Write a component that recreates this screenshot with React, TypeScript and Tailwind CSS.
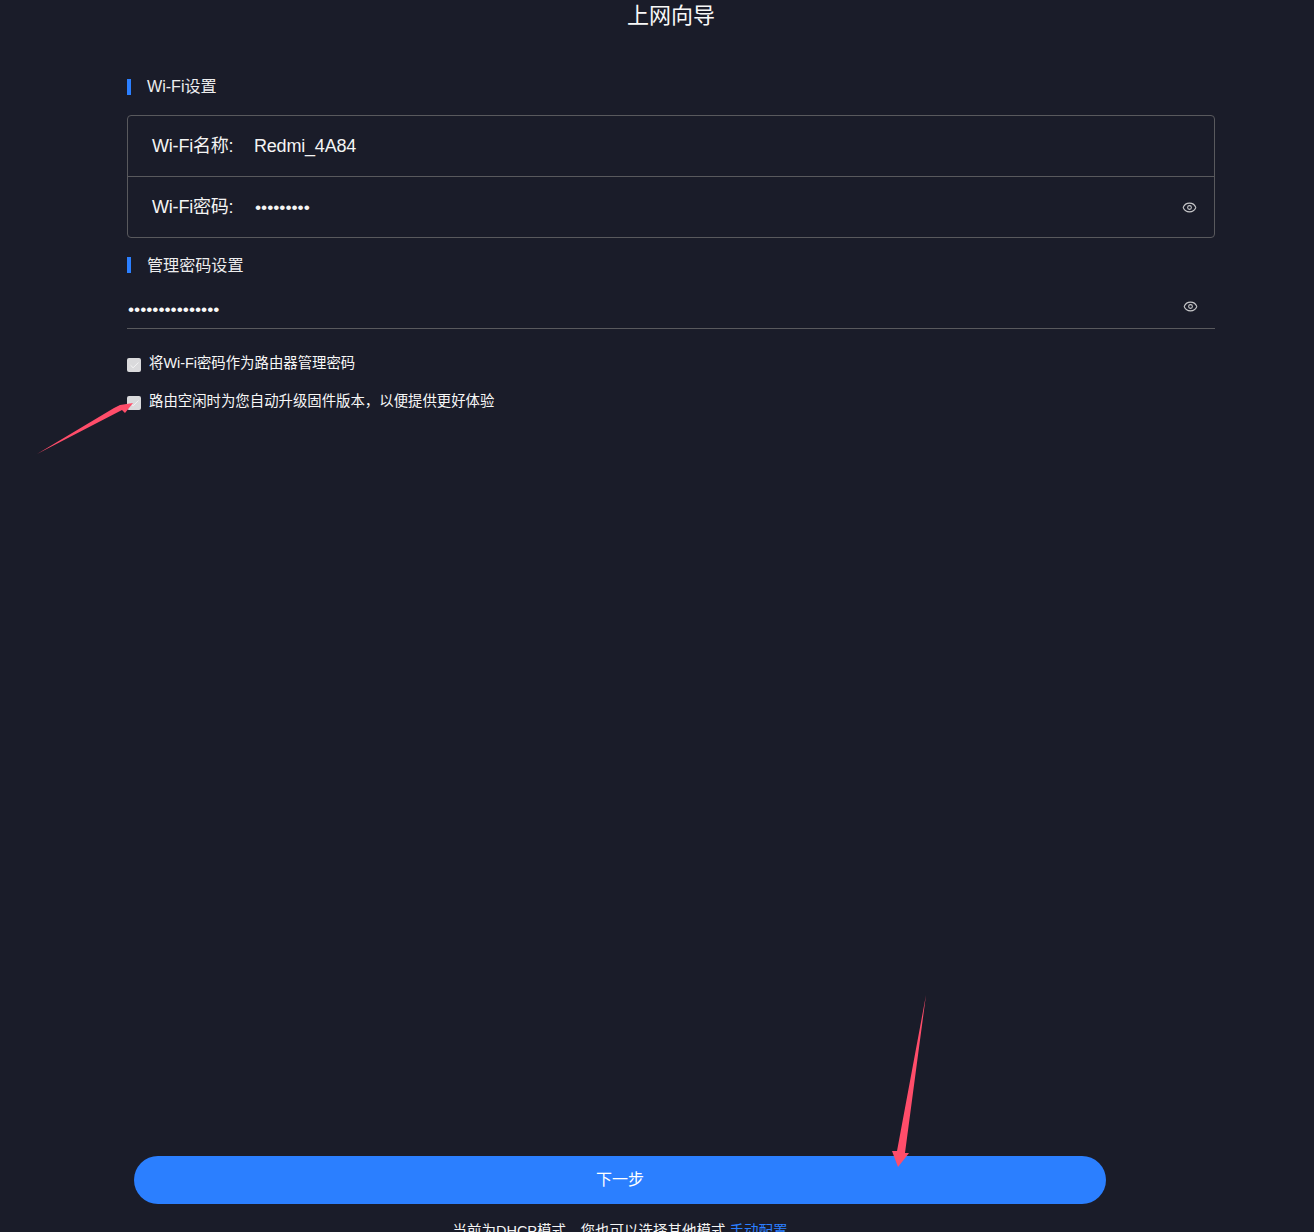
import { Eye, Check } from "lucide-react";

const font = { fontFamily: '"Liberation Sans", "Noto Sans CJK SC", sans-serif' };

function SectionHeader({ title, textClass }: { title: string; textClass: string }) {
  return (
    <div className="flex h-4 items-center border-l-4 border-[#2b7fff] pl-4 text-[16.1px] leading-4 text-[#ededee]">
      <span className={`relative ${textClass}`}>{title}</span>
    </div>
  );
}

function Option({ label, className }: { label: string; className: string }) {
  return (
    <label className={`flex h-[14px] items-center ${className}`}>
      <span className="flex h-[14px] w-[14px] items-center justify-center rounded-[2px] bg-[#dadadc]">
        <Check size={11} strokeWidth={1.75} className="text-[#fafafa]" />
      </span>
      <span className="relative top-[-2px] ml-2 text-[14.4px] leading-[14px] text-[#f7f7f7]">{label}</span>
    </label>
  );
}

export default function App() {
  return (
    <div style={font} className="relative h-[1232px] w-full overflow-hidden bg-[#1a1c29] pl-[127px] pr-[99px] text-white">
      <h1 className="h-8 text-center text-[22px] font-normal leading-8 text-[#f8f8f8]">上网向导</h1>

      <div className="mt-[47px]">
        <SectionHeader title="Wi-Fi设置" textClass="top-[-1px]" />
      </div>

      <div className="mt-5 rounded border border-[#59595d] text-lg tracking-[-0.2px] text-[#f4f4f4]">
        <div className="flex h-[60px] items-center pl-6">
          <span className="w-[102px]">Wi-Fi名称:</span>
          <span>Redmi_4A84</span>
        </div>
        <div className="h-px bg-[#59595d]" />
        <div className="flex h-[60px] items-center pl-6 pr-[17px]">
          <span className="w-[102px]">Wi-Fi密码:</span>
          <span className="relative left-[1px] top-[1px] text-[17.4px] leading-none tracking-normal">•••••••••</span>
          <Eye size={15} strokeWidth={1.7} className="ml-auto text-[#c8c8ca]" />
        </div>
      </div>

      <div className="mt-[19px]">
        <SectionHeader title="管理密码设置" textClass="top-0" />
      </div>

      <div className="mt-4 flex h-[40px] items-center border-b border-[#59595d] pr-[17px]">
        <span className="relative left-[1px] top-[1px] text-[17.4px] leading-none text-[#f8f8f8]">•••••••••••••••</span>
        <Eye size={15} strokeWidth={1.7} className="relative top-[-2px] ml-auto text-[#c8c8ca]" />
      </div>

      <Option className="mt-[29px]" label="将Wi-Fi密码作为路由器管理密码" />
      <Option className="mt-6" label="路由空闲时为您自动升级固件版本，以便提供更好体验" />

      <div className="ml-[7px] mt-[746px] w-[972px]">
        <button className="h-12 w-full rounded-full bg-[#2b7fff] text-base text-white">下一步</button>
        <p className="mt-[17px] text-center text-[14.5px] leading-5 text-[#f4f4f4]">
          当前为DHCP模式，您也可以选择其他模式 <a className="text-[#2b7fff]">手动配置</a>
        </p>
      </div>

      <svg className="pointer-events-none absolute left-0 top-0" width="1314" height="1232" viewBox="0 0 1314 1232" fill="#ff4d6a">
        <polygon points="37,454 114,408 120,405 133,403 125,413 122,410" />
        <polygon points="926,995 905,1153 909,1153 898,1167 892,1151 897,1151" />
      </svg>
    </div>
  );
}
